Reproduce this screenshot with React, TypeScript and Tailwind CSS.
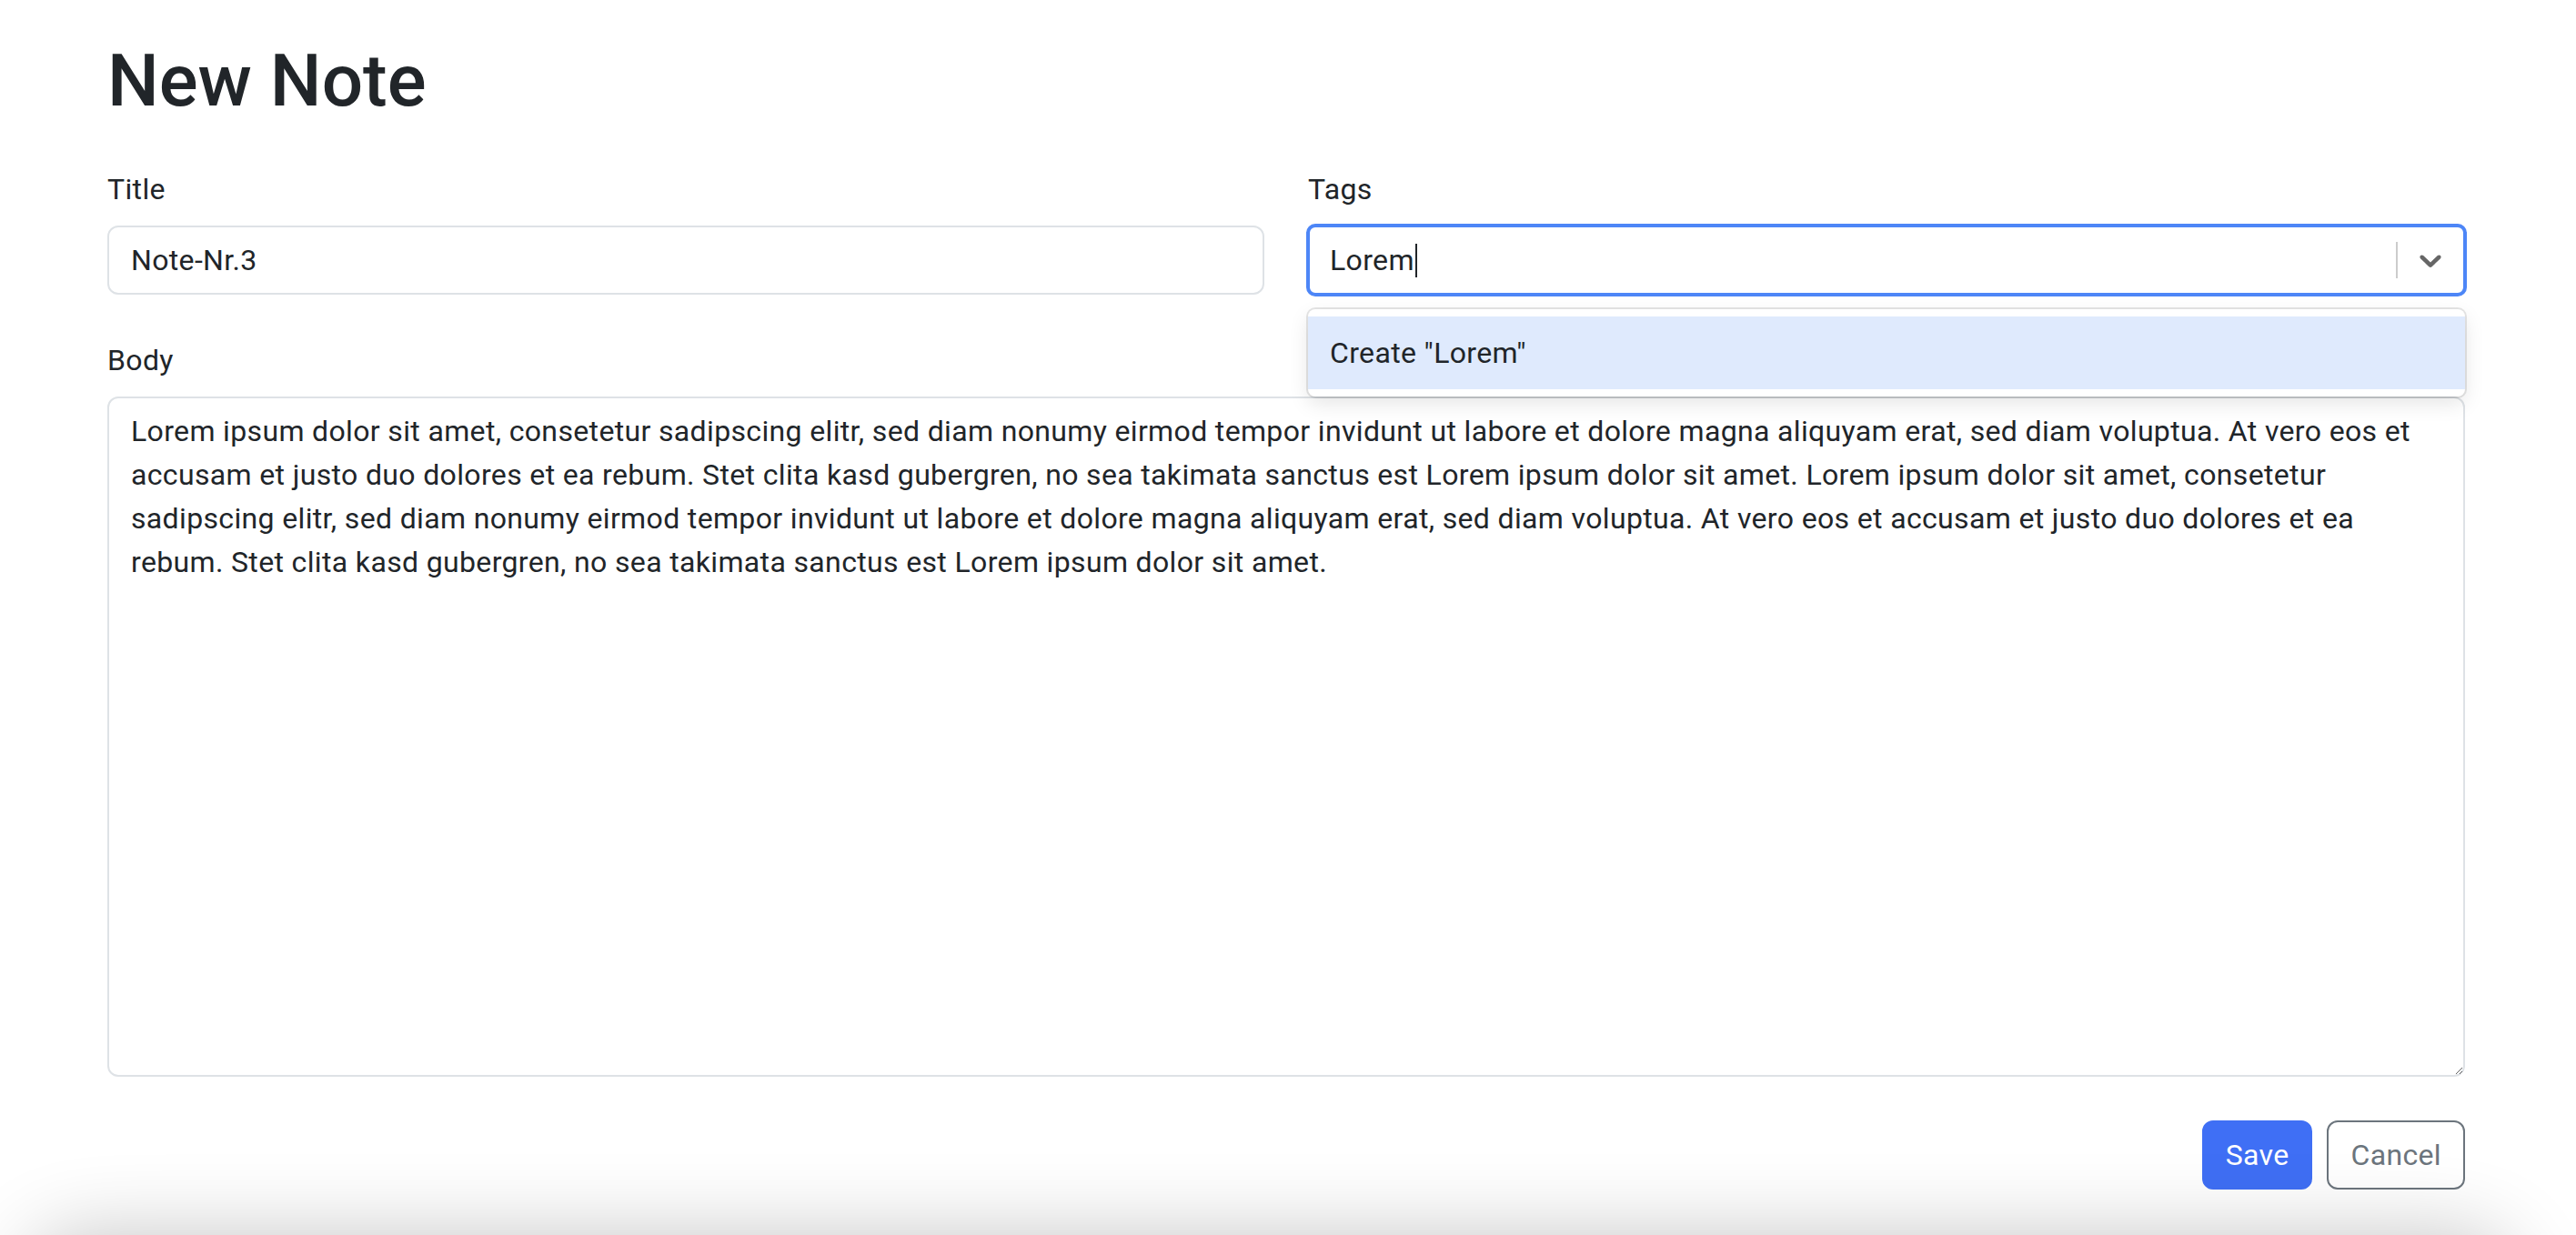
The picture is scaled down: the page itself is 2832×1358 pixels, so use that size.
import React from 'react'

const BODY_TEXT =
  'Lorem ipsum dolor sit amet, consetetur sadipscing elitr, sed diam nonumy eirmod tempor invidunt ut labore et dolore magna aliquyam erat, sed diam voluptua. At vero eos et accusam et justo duo dolores et ea rebum. Stet clita kasd gubergren, no sea takimata sanctus est Lorem ipsum dolor sit amet. Lorem ipsum dolor sit amet, consetetur sadipscing elitr, sed diam nonumy eirmod tempor invidunt ut labore et dolore magna aliquyam erat, sed diam voluptua. At vero eos et accusam et justo duo dolores et ea rebum. Stet clita kasd gubergren, no sea takimata sanctus est Lorem ipsum dolor sit amet.'

function TagsSelect() {
  return (
    <div className="relative">
      {/* control (focused) */}
      <div className="flex h-[76px] items-center rounded-[8px] border-2 border-[#4d86f7] bg-white shadow-[0_0_0_2px_#4d86f7]">
        <div className="flex flex-1 items-center pl-[22px]">
          <span className="text-[32px] leading-[48px] text-[#212529]">Lorem</span>
          <span className="ml-[1px] h-[37px] w-[2px] bg-[#212529]" />
        </div>
        <span className="h-[40px] w-[2px] bg-[#cccccc]" />
        <div className="flex items-center p-[16px]">
          <svg width="40" height="40" viewBox="0 0 20 20" fill="#666666">
            <path d="M4.516 7.548c0.436-0.446 1.043-0.481 1.576 0l3.908 3.747 3.908-3.747c0.533-0.481 1.141-0.446 1.574 0 0.436 0.445 0.408 1.197 0 1.615-0.406 0.418-4.695 4.502-4.695 4.502-0.217 0.223-0.502 0.335-0.787 0.335s-0.57-0.112-0.789-0.335c0 0-4.287-4.084-4.695-4.502s-0.436-1.17 0-1.615z" />
          </svg>
        </div>
      </div>

      {/* menu */}
      <div className="absolute left-0 right-0 top-[calc(100%+16px)] z-10 rounded-[8px] bg-white py-[8px] shadow-[0_0_0_2px_rgba(0,0,0,0.1),0_8px_22px_rgba(0,0,0,0.1)]">
        <div className="flex h-[80px] items-center bg-[#dfeafd] px-[24px] text-[32px] leading-[48px] text-[#212529]">
          Create "Lorem"
        </div>
      </div>
    </div>
  )
}

export default function App() {
  return (
    <div className="relative h-[1358px] overflow-hidden bg-white font-['Roboto','Liberation_Sans',sans-serif] tracking-[0.35px] text-[#212529]">
      <div className="px-[118px] pt-[41px] w-[2828px]">
        <h1 className="mb-[47px] text-[80px] font-medium leading-[96px] tracking-normal text-[#212529]">New Note</h1>

        <div className="grid grid-cols-2 gap-x-[48px]">
          <div>
            <label className="mb-[16px] block text-[32px] leading-[48px]">Title</label>
            <input
              type="text"
              defaultValue="Note-Nr.3"
              className="block h-[76px] w-full rounded-[12px] border-2 border-[#dee2e6] bg-white px-[24px] text-[32px] leading-[48px] text-[#212529] outline-none"
            />
          </div>
          <div>
            <label className="mb-[16px] block text-[32px] leading-[48px]">Tags</label>
            <TagsSelect />
          </div>
        </div>

        <div className="mt-[48px]">
          <label className="mb-[16px] block text-[32px] leading-[48px]">Body</label>
          <textarea
            defaultValue={BODY_TEXT}
            className="block h-[748px] w-full resize-y rounded-[12px] border-2 border-[#dee2e6] bg-white px-[24px] py-[12px] text-[32px] leading-[48px] text-[#212529] outline-none"
          />
        </div>

        <div className="mt-[48px] flex justify-end gap-[16px]">
          <button className="h-[76px] rounded-[12px] border-2 border-[#3f6ff5] bg-[#3f6ff5] px-[24px] text-[32px] leading-[48px] text-white">
            Save
          </button>
          <button className="h-[76px] rounded-[12px] border-2 border-[#6c757d] bg-transparent px-[24px] text-[32px] leading-[48px] text-[#6c757d]">
            Cancel
          </button>
        </div>
      </div>

      {/* shadow of the panel sitting just below the visible area */}
      <div className="absolute left-[30px] right-[70px] top-[1360px] h-[200px] rounded-[60px] bg-white shadow-[0_0_90px_rgba(0,0,0,0.24)]" />
    </div>
  )
}
